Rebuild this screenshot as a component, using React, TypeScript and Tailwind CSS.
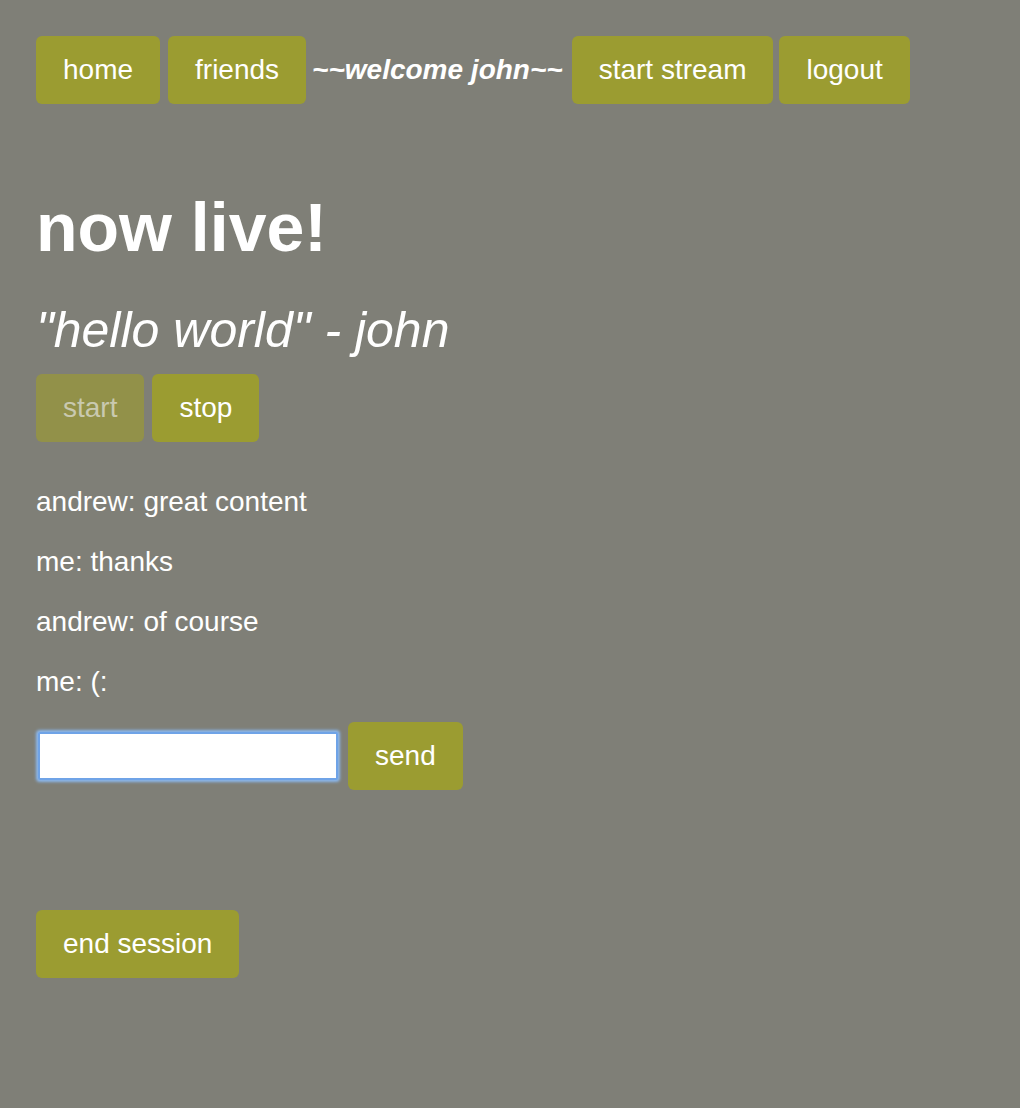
import React from "react";

const btn =
  "bg-[#9b9c31] text-white rounded-[6px] h-[68px] px-[27px] text-[28px] leading-none flex items-center";

export default function App() {
  return (
    <div
      className="min-h-[1108px] w-full bg-[#7f7f77] text-white px-[36px] pt-[36px]"
      style={{ fontFamily: '"Liberation Sans", Arial, sans-serif' }}
    >
      <nav className="flex items-center">
        <div className={btn}>home</div>
        <div className={btn + " ml-[8px]"}>friends</div>
        <div className="ml-[6px] text-[28px] font-bold italic">~~welcome john~~</div>
        <div className={btn + " ml-[9px]"}>start stream</div>
        <div className={btn + " ml-[6px]"}>logout</div>
      </nav>

      <h1 className="mt-[84px] text-[68px] font-bold leading-[78px]">now live!</h1>
      <h2 className="mt-[36px] text-[50px] italic leading-[56px]">
        "hello world" - john
      </h2>

      <div className="mt-[16px] flex gap-[8px]">
        <div className="bg-[#929149] text-[#c9c9b0] rounded-[6px] h-[68px] px-[27px] text-[28px] leading-none flex items-center">
          start
        </div>
        <div className={btn}>stop</div>
      </div>

      <div className="mt-[44px] flex flex-col gap-[28px] text-[28px] leading-[32px]">
        <p>andrew: great content</p>
        <p>me: thanks</p>
        <p>andrew: of course</p>
        <p>me: (:</p>
      </div>

      <div className="mt-[24px] flex items-center gap-[8px]">
        <div className="w-[304px] h-[52px] flex items-center justify-center">
          <div className="w-[300px] h-[48px] bg-white border-2 border-[#6fa3e7] shadow-[0_0_3px_2px_#8bb8ee] rounded-[2px]" />
        </div>
        <div className={btn}>send</div>
      </div>

      <div className="mt-[120px] flex">
        <div className={btn}>end session</div>
      </div>
    </div>
  );
}
